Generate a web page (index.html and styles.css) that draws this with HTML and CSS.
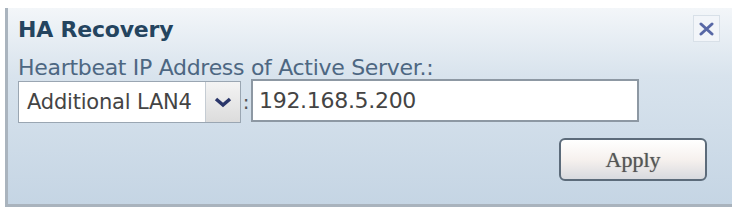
FILE: index.html
```html
<!DOCTYPE html>
<html lang="en">
<head>
  <meta charset="UTF-8" />
  <title>HA Recovery</title>
  <link rel="stylesheet" href="styles.css">
</head>
<body>
  <div class="panel">
    <div class="panel-head">
      <h3>HA Recovery</h3>
      <span class="close">
        <svg width="15" height="14" viewBox="0 0 15 14"><path d="M2 2 L13 12 M13 2 L2 12" stroke="#5868a6" stroke-width="3" stroke-linecap="round"/></svg>
      </span>
    </div>
    <div class="label">Heartbeat IP Address of Active Server.:</div>
    <div class="row">
      <div class="select">
        <span class="select-text">Additional LAN4</span>
        <span class="select-arrow">
          <svg width="18" height="11" viewBox="0 0 18 11"><path d="M2 2 L9 8 L16 2" fill="none" stroke="#2a366a" stroke-width="3.5"/></svg>
        </span>
      </div>
      <span class="colon">:</span>
      <input class="ip" type="text" value="192.168.5.200">
    </div>
    <div class="btns">
      <button class="apply">Apply</button>
    </div>
  </div>
</body>
</html>
```
FILE: styles.css
```css
* { margin: 0; padding: 0; box-sizing: border-box; }
body { background: #fff; font-family: Tahoma, "DejaVu Sans", sans-serif; }

.panel {
  margin: 8px 0 0 5px;
  height: 199px;
  border-left: 3px solid #aab4be;
  border-bottom: 3px solid #a9b3bd;
  background: linear-gradient(to bottom, #f3f6f9 0%, #d8e3ed 35%, #c5d5e4 100%);
  padding: 9px 0 0 10px;
}

.panel-head {
  display: flex;
  justify-content: space-between;
  align-items: flex-start;
  padding-right: 12px;
  height: 26px;
}

.panel-head h3 {
  font-size: 22px;
  line-height: 26px;
  color: #24445f;
  font-weight: bold;
  letter-spacing: -0.2px;
}

.close {
  width: 27px;
  height: 27px;
  margin-top: -2px;
  background: #f2f5f9;
  border: 1px solid #d8e0e8;
  display: flex;
  align-items: center;
  justify-content: center;
}

.label {
  margin-top: 12px;
  font-size: 22px;
  line-height: 26px;
  color: #4d6782;
  letter-spacing: -0.3px;
}

.row {
  display: flex;
  align-items: center;
}

.select {
  display: flex;
  height: 42px;
  border: 1px solid #9aa6b2;
  background: #fff;
}

.select-text {
  width: 187px;
  padding-left: 8px;
  display: flex;
  align-items: center;
  font-size: 21px;
  color: #444;
  border-right: 1px solid #c5ccd3;
  letter-spacing: -0.2px;
}

.select-arrow {
  width: 34px;
  display: flex;
  align-items: center;
  justify-content: center;
  background: linear-gradient(to bottom, #f4f4f4, #dcdcdc);
}

.colon {
  width: 10px;
  text-align: center;
  font-size: 20px;
  color: #555;
}

.ip {
  width: 388px;
  height: 43px;
  margin-top: -3px;
  border: 2px solid #8d98a3;
  background: #fff;
  padding-left: 6px;
  font-family: Tahoma, "DejaVu Sans", sans-serif;
  font-size: 22px;
  color: #444;
  letter-spacing: -0.3px;
  outline: none;
}

.btns {
  display: flex;
  justify-content: flex-end;
  padding-right: 25px;
  margin-top: 15px;
}

.apply {
  width: 148px;
  height: 43px;
  border: 2px solid #5c6b7a;
  border-radius: 6px;
  background: linear-gradient(to bottom, #ffffff 0%, #f6f1ee 50%, #d8dadf 100%);
  font-family: "Liberation Serif", serif;
  font-size: 22px;
  color: #555;
  text-shadow: 0 0 1px #888;
}
```
